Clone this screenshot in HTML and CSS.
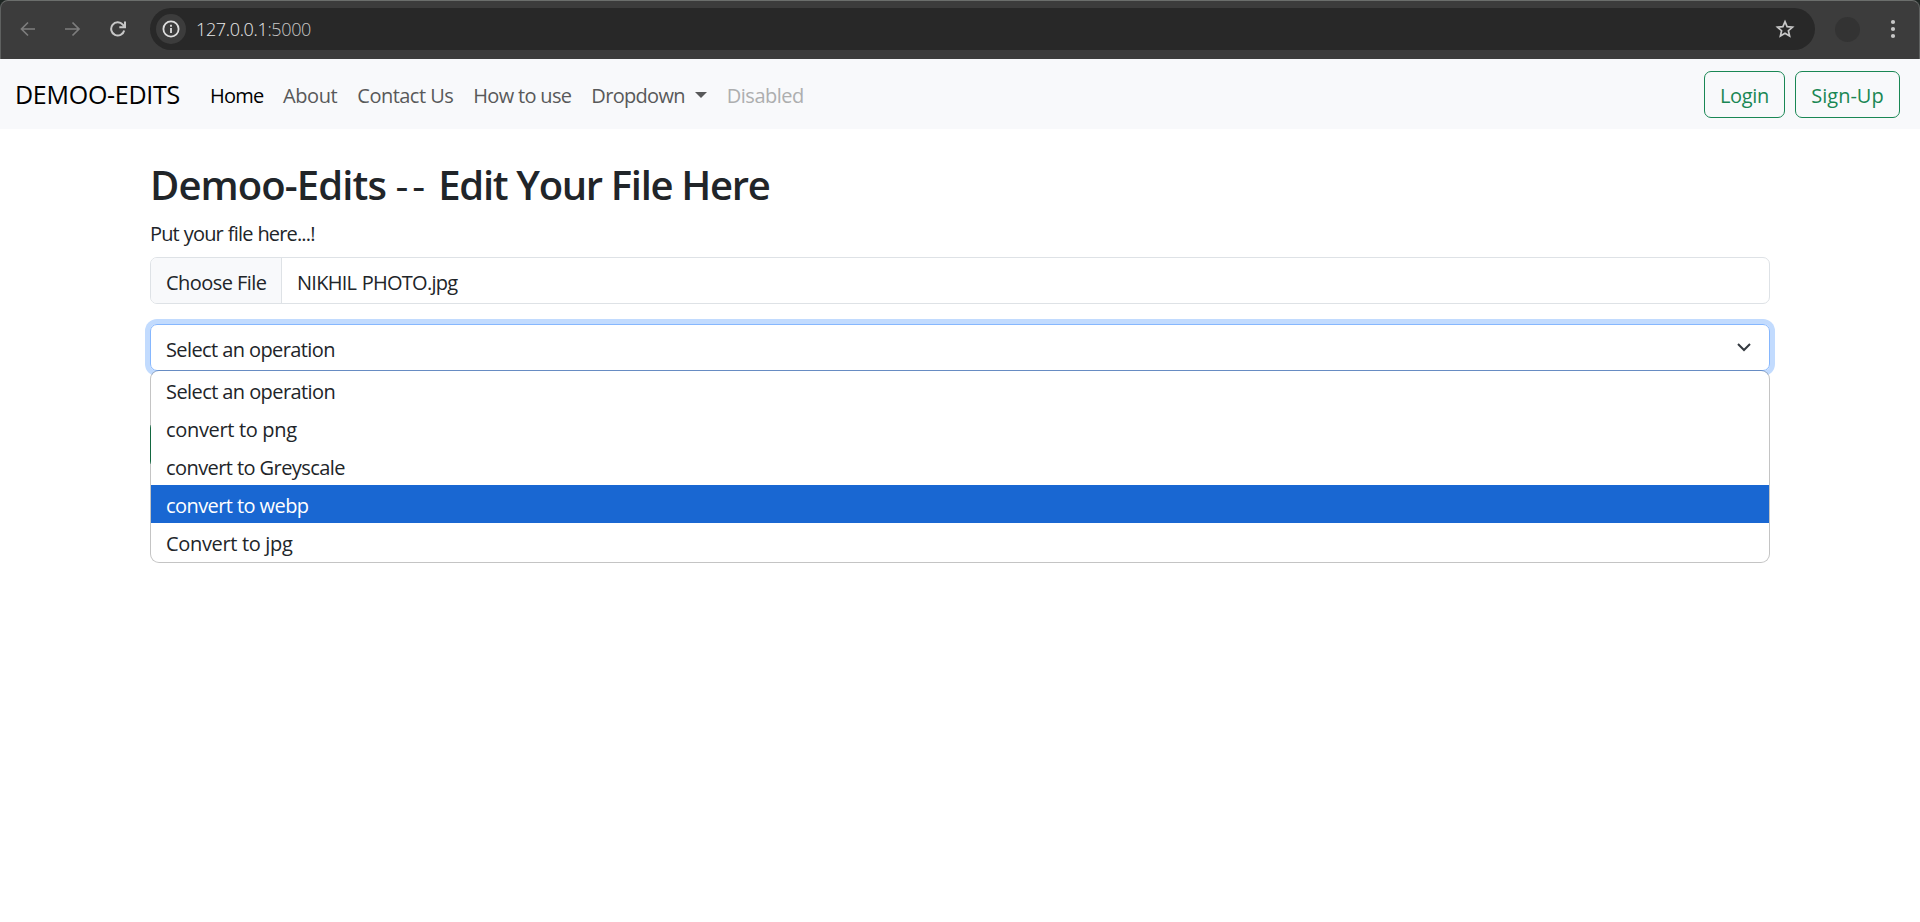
FILE: index.html
```html
<!DOCTYPE html>
<html lang="en">
<head>
<meta charset="utf-8">
<title>Demoo-Edits</title>
<link rel="stylesheet" href="styles.css">
</head>
<body>
<div class="browser-wrap"><div class="browser">
  <svg class="nav-icon dim" viewBox="0 0 16 16"><path d="M15 8H2M8 1.5 1.5 8 8 14.5"/></svg>
  <svg class="nav-icon dim" viewBox="0 0 16 16"><path d="M0 8h13M7.5 1.5 14 8 7.5 14.5"/></svg>
  <svg class="nav-icon reload" viewBox="0 0 16 16"><path d="M14.2 9.5A6.6 6.6 0 1 1 12.8 3.6L14.5 5.6M15 .5v5.7H9.3"/></svg>
  <div class="address">
    <span class="info"><svg viewBox="0 0 18 18"><circle cx="9" cy="9" r="7.6"/><path d="M9 8v5M9 4.8v2"/></svg></span>
    <span class="url"><b>127.0.0.1</b>:5000</span>
    <svg class="star" viewBox="0 0 20 20"><path d="m10 2.6 2.1 5 5.4.5-4.1 3.6 1.2 5.3-4.6-2.8-4.6 2.8 1.2-5.3-4.1-3.6 5.4-.5z"/></svg>
  </div>
  <span class="avatar"></span>
  <svg class="kebab" viewBox="0 0 6 20"><circle cx="3" cy="3" r="2.1"/><circle cx="3" cy="10" r="2.1"/><circle cx="3" cy="17" r="2.1"/></svg>
</div></div>
<nav class="navbar">
  <a class="brand">DEMOO-EDITS</a>
  <a class="link active home">Home</a>
  <a class="link about">About</a>
  <a class="link contact">Contact Us</a>
  <a class="link how">How to use</a>
  <a class="link drop"><span>Dropdown</span><i class="caret"></i></a>
  <a class="link disabled">Disabled</a>
  <div class="actions"><button class="btn login">Login</button><button class="btn signup">Sign-Up</button></div>
</nav>
<main class="container">
  <h1><span class="name">Demoo-Edits </span><span class="dashes">--</span><span class="tagline"> Edit Your File Here</span></h1>
  <label class="label">Put your file here...!</label>
  <div class="file"><span class="choose">Choose File</span><span class="filename">NIKHIL PHOTO.jpg</span></div>
  <div class="select-wrap">
    <div class="select"><span class="op">Select an operation</span>
      <svg class="chevron" viewBox="0 0 16 16"><path d="m2 5 6 6 6-6"/></svg></div>
    <ul class="menu">
      <li class="wide">Select an operation</li>
      <li>convert to png</li>
      <li class="wide">convert to Greyscale</li>
      <li class="wide selected">convert to webp</li>
      <li>Convert to jpg</li>
    </ul>
  </div>
  <button class="btn submit" aria-label="Submit"></button>
</main>
</body>
</html>
```
FILE: styles.css
```css
* { box-sizing: border-box; }
body { margin: 0; min-height: 922px; background: #fff; color: #212529; font: 20px/30px "Open Sans", "Noto Sans", sans-serif; }
svg { fill: none; display: block; flex: none; }
.browser-wrap { background: #1f2623; }
.browser { height: 59px; display: flex; align-items: center; padding: 0 23px 2px 19px; background: #3c3c3c; border: 1px solid #5f6160; border-top-color: #6b6e6c; border-bottom: 0; border-radius: 8px 8px 0 0; }
.nav-icon { width: 16px; height: 16px; margin-right: 29px; stroke: #7d7d7d; stroke-width: 1.7; }
.reload { stroke: #c7c7c7; stroke-width: 2; margin-right: 24px; }
.address { flex: 1; height: 42px; display: flex; align-items: center; background: #282828; border-radius: 21px; padding: 0 20px 0 6px; }
.info { width: 30px; height: 30px; border-radius: 50%; background: #3c3c3c; display: grid; place-items: center; }
.info svg { width: 18px; height: 18px; stroke: #dedede; stroke-width: 1.8; }
.url { font-size: 18px; font-weight: 300; color: #c7c7c7; margin-left: 10px; letter-spacing: -.35px; }
.url b { font-weight: 300; color: #e8e8e8; }
.star { width: 20px; height: 20px; margin-left: auto; stroke: #c7c7c7; stroke-width: 1.7; }
.avatar { width: 25px; height: 25px; border-radius: 50%; background: #333; margin: 0 30px 0 20px; }
.kebab { width: 6px; height: 20px; fill: #c7c7c7; }
.navbar { height: 70px; background: #f8f9fb; display: flex; align-items: center; padding: 0 20px 0 15px; }
.link, .brand { white-space: nowrap; color: #58595a; }
.brand { color: #000; font-size: 25px; margin-right: 30px; letter-spacing: -.27px; }
.link { margin-right: 20px; padding-top: 4px; display: flex; align-items: center; }
.active { color: #000; }
.home { letter-spacing: -.75px; margin-right: 19.5px; }
.about { letter-spacing: -.4px; }
.contact { letter-spacing: -.52px; }
.how { letter-spacing: -.68px; }
.drop { letter-spacing: -.69px; }
.disabled { color: #adaeaf; letter-spacing: -.5px; }
.caret { border: 6px solid transparent; border-top-color: #58595a; border-bottom: 0; margin: -3px 0 0 10px; }
.actions { display: flex; gap: 10px; margin-left: auto; }
.btn { height: 47px; border: 1px solid #198754; border-radius: 7px; background: none; color: #198754; font: inherit; padding: 4px 0 0; text-align: center; }
.login { width: 81px; letter-spacing: -.3px; }
.signup { width: 105px; }
.container { width: 1620px; margin: 0 auto; padding-top: 32px; }
h1 { margin: 0; font-size: 40px; line-height: 48px; font-weight: 600; white-space: pre; }
.name { letter-spacing: -.9px; }
.dashes { font-weight: 400; letter-spacing: 4px; }
.tagline { letter-spacing: -1.32px; }
.label { display: block; margin-top: 10px; letter-spacing: -.85px; word-spacing: .6px; }
.file { margin-top: 8px; height: 47px; display: flex; border: 1px solid #dee2e6; border-radius: 7px; overflow: hidden; line-height: 50px; }
.choose { width: 131px; padding-left: 15px; background: #f8f9fb; border-right: 1px solid #dee2e6; white-space: nowrap; letter-spacing: -.55px; }
.filename { margin-left: 15px; letter-spacing: -.74px; word-spacing: 1px; }
.select-wrap { margin-top: 20px; position: relative; z-index: 1; }
.select { height: 47px; display: flex; align-items: center; justify-content: space-between; border: 1px solid #86b7fe; border-radius: 7px; box-shadow: 0 0 0 5px #c2dbfe; padding: 0 17px 0 15px; }
.op { padding-top: 5px; letter-spacing: -.6px; }
.chevron { width: 16px; height: 16px; margin-bottom: 1px; stroke: #343a40; stroke-width: 2; }
.menu { position: absolute; top: 46px; left: 0; width: 100%; margin: 0; padding: 0 0 1px; list-style: none; background: #fff; background-clip: padding-box; border: 1px solid rgba(0, 0, 0, .23); border-radius: 9px; overflow: hidden; }
.menu li { height: 38px; line-height: 42px; padding-left: 15px; letter-spacing: -.33px; }
.menu .wide { letter-spacing: -.58px; }
.menu .selected { background: #1967d2; color: #fff; }
.submit { width: 90px; display: block; margin-top: 50px; }
```
